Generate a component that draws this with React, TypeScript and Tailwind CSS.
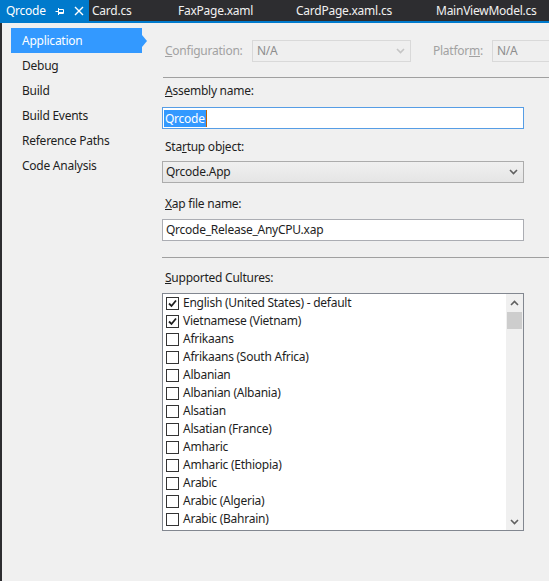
import React from "react";

const cultures: { name: string; checked?: boolean }[] = [
  { name: "English (United States) - default", checked: true },
  { name: "Vietnamese (Vietnam)", checked: true },
  { name: "Afrikaans" },
  { name: "Afrikaans (South Africa)" },
  { name: "Albanian" },
  { name: "Albanian (Albania)" },
  { name: "Alsatian" },
  { name: "Alsatian (France)" },
  { name: "Amharic" },
  { name: "Amharic (Ethiopia)" },
  { name: "Arabic" },
  { name: "Arabic (Algeria)" },
  { name: "Arabic (Bahrain)" },
];

const pages = [
  "Application",
  "Debug",
  "Build",
  "Build Events",
  "Reference Paths",
  "Code Analysis",
];

function Chevron({ color = "#606060", up = false }: { color?: string; up?: boolean }) {
  return (
    <svg width="9" height="6" viewBox="0 0 9 6">
      <polyline
        points={up ? "1,5 4.5,1.5 8,5" : "1,1 4.5,4.5 8,1"}
        fill="none"
        stroke={color}
        strokeWidth="1.6"
      />
    </svg>
  );
}

function Check() {
  return (
    <svg width="9" height="9" viewBox="0 0 9 9">
      <polyline points="1,4.5 3.5,7 8,1.5" fill="none" stroke="#1e1e1e" strokeWidth="1.8" />
    </svg>
  );
}

export default function App() {
  return (
    <div
      className="w-[549px] h-[581px] bg-[#2d2d30] flex flex-col overflow-hidden text-[12px] tracking-[-0.25px] text-[#1e1e1e]"
      style={{ fontFamily: '"Noto Sans", "Open Sans", sans-serif' }}
    >
      {/* TAB STRIP */}
      <div className="h-[21px] flex items-center text-[#f1f1f1] shrink-0 whitespace-nowrap">
        <div className="h-full w-[89px] shrink-0 bg-[#007acc] flex items-center pl-[6px] text-white">
          <span>Qrcode</span>
          <svg width="10" height="10" viewBox="0 0 10 10" className="ml-[9px]">
            <path d="M0.5 5.5H3.5M3.5 2V9M3.5 3.5H8.5V7.5H3.5M3.5 6.5H8.5" fill="none" stroke="white" strokeWidth="1" />
          </svg>
          <svg width="10" height="10" viewBox="0 0 10 10" className="ml-[9px]">
            <path d="M1 1L9 9M9 1L1 9" stroke="white" strokeWidth="1.4" />
          </svg>
        </div>
        <div className="w-[89px] shrink-0 pl-[3px]">Card.cs</div>
        <div className="w-[118px] shrink-0">FaxPage.xaml</div>
        <div className="w-[140px] shrink-0">CardPage.xaml.cs</div>
        <div className="shrink-0">MainViewModel.cs</div>
      </div>
      <div className="h-[2px] bg-[#007acc] shrink-0" />

      {/* BODY */}
      <div className="flex-1 ml-[2px] bg-[#f0f0f0] flex min-h-0">
        {/* LEFT NAV */}
        <div className="w-[160px] shrink-0 pt-[5px] pl-[9px]">
          {pages.map((p, i) =>
            i === 0 ? (
              <div key={p} className="relative h-[25px] w-[131px] bg-[#3399ff] text-white flex items-center pl-[11px]">
                {p}
                <div className="absolute right-[-5px] top-[7px] w-0 h-0 border-y-[6px] border-y-transparent border-l-[5px] border-l-[#3399ff]" />
              </div>
            ) : (
              <div key={p} className="h-[25px] flex items-center pl-[11px]">
                {p}
              </div>
            )
          )}
        </div>

        {/* MAIN */}
        <div className="flex-1 pt-[17px] min-w-0 overflow-hidden">
          <div className="flex items-center h-[22px] pl-[3px] whitespace-nowrap">
            <span className="text-[#a2a2a2] w-[87px] shrink-0">
              <span className="underline">C</span>onfiguration:
            </span>
            <div className="w-[159px] h-[22px] border border-[#d9d9d9] bg-[#efefef] flex items-center justify-between pl-[4px] pr-[5px] text-[#8d8d8d] shrink-0">
              <span>N/A</span>
              <Chevron color="#c5c5c5" />
            </div>
            <span className="text-[#a2a2a2] ml-[22px] w-[59px] shrink-0">
              Platfor<span className="underline">m</span>:
            </span>
            <div className="w-[80px] h-[22px] border border-r-0 border-[#d9d9d9] bg-[#efefef] flex items-center pl-[4px] text-[#8d8d8d] shrink-0">
              N/A
            </div>
          </div>

          <div className="mt-[15px] h-px bg-[#a0a0a0] ml-px" />

          <div className="mt-[5px] h-[16px] leading-[16px] pl-[3px]">
            <span className="underline">A</span>ssembly name:
          </div>
          <div className="mt-[8px] w-[362px] h-[22px] border border-[#569de5] bg-white flex items-center pl-[1px]">
            <span className="bg-[#3399ff] text-white leading-[17px] px-px border-r border-r-[#c06000]">Qrcode</span>
          </div>

          <div className="mt-[10px] h-[16px] leading-[16px] pl-[3px]">
            Sta<span className="underline">r</span>tup object:
          </div>
          <div className="mt-[6px] w-[362px] h-[22px] border border-[#acacac] bg-gradient-to-b from-[#f0f0f0] to-[#e5e5e5] flex items-center justify-between pl-[3px] pr-[5px]">
            <span>Qrcode.App</span>
            <Chevron />
          </div>

          <div className="mt-[13px] h-[16px] leading-[16px] pl-[3px]">
            <span className="underline">X</span>ap file name:
          </div>
          <div className="mt-[7px] w-[362px] h-[22px] border border-[#abadb3] bg-white flex items-center pl-[3px]">
            Qrcode_Release_AnyCPU.xap
          </div>

          <div className="mt-[16px] h-px bg-[#a0a0a0]" />

          <div className="mt-[12px] h-[16px] leading-[16px] pl-[3px]">
            <span className="underline">S</span>upported Cultures:
          </div>
          <div className="mt-[7px] w-[362px] h-[238px] border border-[#828790] bg-white flex overflow-hidden">
            <div className="flex-1 min-w-0">
              {cultures.map((c) => (
                <div key={c.name} className="h-[18px] flex items-center pl-[3px] whitespace-nowrap">
                  <div className="w-[13px] h-[13px] border border-[#333333] bg-white flex items-center justify-center shrink-0">
                    {c.checked && <Check />}
                  </div>
                  <span className="ml-[4px]">{c.name}</span>
                </div>
              ))}
            </div>
            <div className="w-[17px] bg-[#f0f0f0] flex flex-col shrink-0">
              <div className="h-[18px] flex items-center justify-center">
                <Chevron up />
              </div>
              <div className="h-[17px] mx-px bg-[#cdcdcd]" />
              <div className="flex-1" />
              <div className="h-[17px] flex items-center justify-center">
                <Chevron />
              </div>
            </div>
          </div>
        </div>
      </div>
    </div>
  );
}
